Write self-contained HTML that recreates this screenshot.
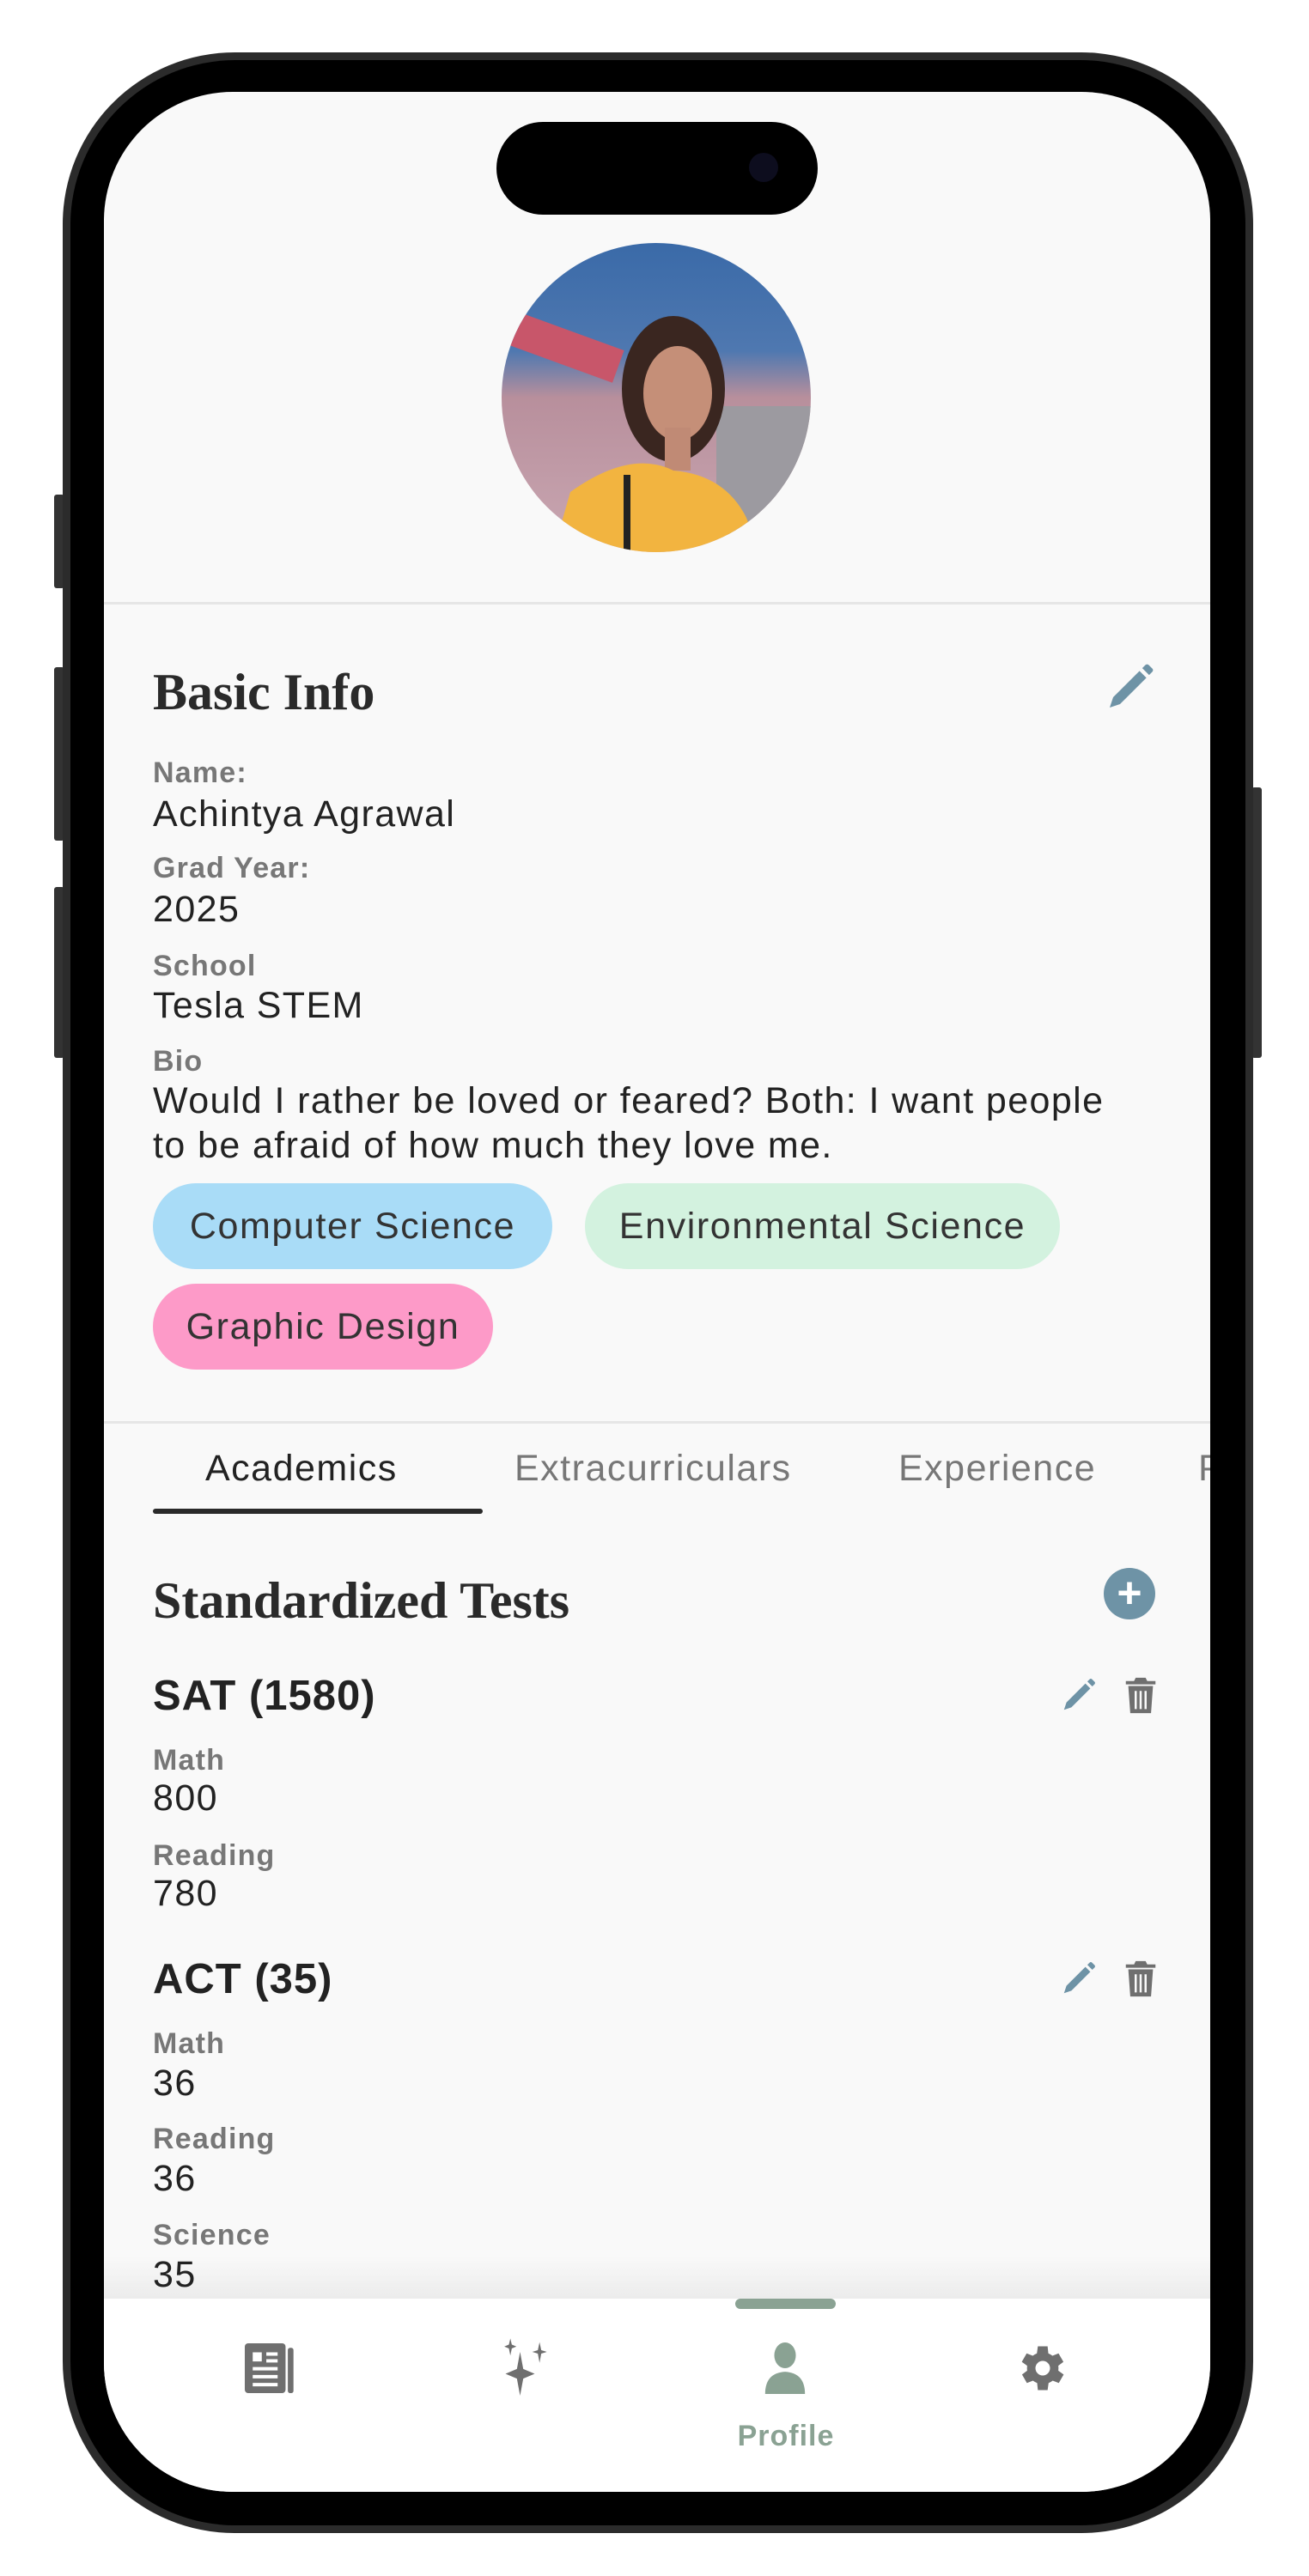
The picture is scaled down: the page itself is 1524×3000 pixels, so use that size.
<!DOCTYPE html>
<html><head><meta charset="utf-8"><style>
*{margin:0;padding:0;box-sizing:border-box}
body{width:1524px;height:3000px;background:#fff;position:relative;overflow:hidden;font-family:"Liberation Sans",sans-serif}
.a{position:absolute;white-space:nowrap}
.lbl{position:absolute;left:178px;font-size:34px;font-weight:bold;color:#777;line-height:40px;letter-spacing:1.2px}
.val{position:absolute;left:178px;font-size:43px;color:#222;line-height:48px;letter-spacing:1.4px}
.chip{position:absolute;height:100px;border-radius:50px;font-size:43px;color:#333;line-height:100px;text-align:center;letter-spacing:1.6px}
.serif{font-family:"Liberation Serif",serif;color:#2a2a2a;font-size:60px;line-height:70px;font-weight:bold}
.tab{position:absolute;top:4px;font-size:43px;line-height:52px;letter-spacing:1.5px}
</style></head><body>
<div class="a" style="left:63px;top:576px;width:12px;height:109px;background:#333;border-radius:3px"></div>
<div class="a" style="left:63px;top:777px;width:12px;height:202px;background:#333;border-radius:3px"></div>
<div class="a" style="left:63px;top:1033px;width:12px;height:199px;background:#333;border-radius:3px"></div>
<div class="a" style="left:1457px;top:917px;width:12px;height:315px;background:#333;border-radius:3px"></div>
<div class="a" style="left:73px;top:61px;width:1386px;height:2889px;border-radius:200px;background:#2b2b2b"></div>
<div class="a" style="left:82px;top:70px;width:1368px;height:2871px;border-radius:192px;background:#000"></div>
<div class="a" style="left:121px;top:107px;width:1288px;height:2795px;border-radius:150px;background:#f9f9f9;overflow:hidden">
  <div class="a" style="left:0;top:2520px;width:1288px;height:50px;background:linear-gradient(#f9f9f9,#ececec)"></div>
  <div class="a" style="left:0;top:2570px;width:1288px;height:230px;background:#fff"></div>
</div>
<div class="a" style="left:578px;top:142px;width:374px;height:108px;border-radius:54px;background:#000"></div>
<div class="a" style="left:872px;top:178px;width:34px;height:34px;border-radius:50%;background:#0d0d1e"></div>
<svg class="a" style="left:584px;top:283px" width="360" height="360" viewBox="0 0 360 360">
<defs><clipPath id="c"><circle cx="180" cy="180" r="180"/></clipPath>
<linearGradient id="bg" x1="0" y1="0" x2="0" y2="1"><stop offset="0" stop-color="#3a6aa8"/><stop offset=".35" stop-color="#4f78b0"/><stop offset=".5" stop-color="#b88f9c"/><stop offset="1" stop-color="#c9a7b2"/></linearGradient></defs>
<g clip-path="url(#c)">
<rect width="360" height="360" fill="url(#bg)"/>
<rect x="0" y="100" width="140" height="40" fill="#c8566a" transform="rotate(20 70 120)"/>
<rect x="250" y="190" width="110" height="150" fill="#9c9aa0"/>
<ellipse cx="200" cy="170" rx="60" ry="85" fill="#3a2620"/>
<ellipse cx="205" cy="175" rx="40" ry="55" fill="#c58f78"/>
<rect x="190" y="215" width="30" height="50" fill="#c08a75"/>
<path d="M60 360 L80 290 Q150 240 200 265 Q260 270 285 320 L300 360Z" fill="#f2b440"/>
<rect x="142" y="270" width="8" height="90" fill="#222"/>
</g></svg>
<div class="a" style="left:121px;top:701px;width:1288px;height:3px;background:#e6e6e6"></div>
<div class="a serif" style="left:178px;top:771px">Basic Info</div>
<svg class="a" style="left:1284px;top:768px" width="64" height="64" viewBox="0 0 24 24"><path d="M3 21 L4.5 16.5 L16 5 L19 8 L7.5 19.5Z M17.2 3.8 L18.6 2.4 Q19.3 1.8 20 2.4 L21.6 4 Q22.2 4.7 21.6 5.4 L20.2 6.8Z" fill="#6e93a6"/></svg>
<div class="lbl" style="top:880px">Name:</div>
<div class="val" style="top:924px">Achintya Agrawal</div>
<div class="lbl" style="top:991px">Grad Year:</div>
<div class="val" style="top:1035px">2025</div>
<div class="lbl" style="top:1105px">School</div>
<div class="val" style="top:1147px">Tesla STEM</div>
<div class="lbl" style="top:1216px">Bio</div>
<div class="val" style="top:1258px">Would I rather be loved or feared? Both: I want people</div>
<div class="val" style="top:1310px">to be afraid of how much they love me.</div>
<div class="chip" style="left:178px;top:1378px;width:465px;background:#a9dcf7">Computer Science</div>
<div class="chip" style="left:681px;top:1378px;width:553px;background:#d3f2df">Environmental Science</div>
<div class="chip" style="left:178px;top:1495px;width:396px;background:#fd9ac8">Graphic Design</div>
<div class="a" style="left:121px;top:1655px;width:1288px;height:3px;background:#e6e6e6"></div>
<div class="a" style="left:121px;top:1680px;width:1288px;height:60px;overflow:hidden">
<div class="tab" style="left:118px;color:#222">Academics</div>
<div class="tab" style="left:478px;color:#777">Extracurriculars</div>
<div class="tab" style="left:925px;color:#777">Experience</div>
<div class="tab" style="left:1274px;color:#777">P</div>
</div>
<div class="a" style="left:178px;top:1757px;width:384px;height:6px;background:#2a2a2a;border-radius:3px"></div>
<div class="a serif" style="left:178px;top:1829px">Standardized Tests</div>
<div class="a" style="left:1285px;top:1826px;width:60px;height:60px;border-radius:50%;background:#6e93a6;color:#fff;font-size:50px;line-height:58px;text-align:center;font-weight:bold">+</div>
<div class="a" style="left:178px;top:1946px;font-size:49px;font-weight:bold;color:#222;line-height:58px;letter-spacing:1px">SAT (1580)</div>
<svg class="a" style="left:1233px;top:1951px" width="46" height="46" viewBox="0 0 24 24"><path d="M3 21 L4.5 16.5 L16 5 L19 8 L7.5 19.5Z M17.2 3.8 L18.6 2.4 Q19.3 1.8 20 2.4 L21.6 4 Q22.2 4.7 21.6 5.4 L20.2 6.8Z" fill="#6e93a6"/></svg>
<svg class="a" style="left:1308px;top:1952px" width="40" height="46" viewBox="0 0 20 24"><path d="M7 1h6l1 2h5v2H1V3h5z M2.5 6h15l-1.2 16.5H3.7z" fill="#6f6f6f"/><path d="M7 9v11M10 9v11M13 9v11" stroke="#f9f9f9" stroke-width="1.3"/></svg>
<div class="lbl" style="top:2030px">Math</div>
<div class="val" style="top:2070px">800</div>
<div class="lbl" style="top:2141px">Reading</div>
<div class="val" style="top:2181px">780</div>
<div class="a" style="left:178px;top:2276px;font-size:49px;font-weight:bold;color:#222;line-height:58px;letter-spacing:1px">ACT (35)</div>
<svg class="a" style="left:1233px;top:2281px" width="46" height="46" viewBox="0 0 24 24"><path d="M3 21 L4.5 16.5 L16 5 L19 8 L7.5 19.5Z M17.2 3.8 L18.6 2.4 Q19.3 1.8 20 2.4 L21.6 4 Q22.2 4.7 21.6 5.4 L20.2 6.8Z" fill="#6e93a6"/></svg>
<svg class="a" style="left:1308px;top:2282px" width="40" height="46" viewBox="0 0 20 24"><path d="M7 1h6l1 2h5v2H1V3h5z M2.5 6h15l-1.2 16.5H3.7z" fill="#6f6f6f"/><path d="M7 9v11M10 9v11M13 9v11" stroke="#f9f9f9" stroke-width="1.3"/></svg>
<div class="lbl" style="top:2360px">Math</div>
<div class="val" style="top:2402px">36</div>
<div class="lbl" style="top:2471px">Reading</div>
<div class="val" style="top:2513px">36</div>
<div class="lbl" style="top:2583px">Science</div>
<div class="val" style="top:2625px">35</div>
<div class="a" style="left:121px;top:2677px;width:1288px;height:40px;background:#fff"></div>
<div class="a" style="left:856px;top:2677px;width:117px;height:12px;border-radius:6px;background:#8aa293"></div>
<svg class="a" style="left:285px;top:2728px" width="58" height="60" viewBox="0 0 22 22"><rect x="0" y="0" width="18" height="22" rx="1.5" fill="#6f6f6f"/><rect x="19" y="2" width="2.5" height="20" rx="1" fill="#6f6f6f"/><path d="M3.5 4h4v4h-4zM9.5 4h5v1.5h-5zM9.5 7h5v1.5h-5zM3.5 10.5h11v1.5h-11zM3.5 14h11v1.5h-11zM3.5 17.5h11v1.5h-11z" fill="#fff"/></svg>
<svg class="a" style="left:580px;top:2722px" width="68" height="68" viewBox="0 0 24 24"><path d="M9 6 L10.3 13 L15 15 L10.3 17 L9 24 L7.7 17 L3 15 L7.7 13Z M5 0.5 L5.6 3 L7.5 3.8 L5.6 4.6 L5 7.5 L4.4 4.6 L2.5 3.8 L4.4 3Z M17 2 L17.7 5.3 L20 6 L17.7 6.7 L17 10.5 L16.3 6.7 L14 6 L16.3 5.3Z" fill="#6f6f6f"/></svg>
<svg class="a" style="left:886px;top:2728px" width="56" height="60" viewBox="0 0 20 22"><ellipse cx="10" cy="5.5" rx="4.6" ry="5.5" fill="#8aa293"/><path d="M1.5 22 Q1.5 13 10 12.5 Q18.5 13 18.5 22Z" fill="#8aa293"/></svg>
<svg class="a" style="left:1180px;top:2724px" width="68" height="68" viewBox="0 0 24 24"><path d="M19.4 13a7.7 7.7 0 0 0 0-2l2.1-1.6-2-3.5-2.5 1a7.5 7.5 0 0 0-1.7-1L15 3h-4l-.4 2.9a7.5 7.5 0 0 0-1.7 1l-2.5-1-2 3.5L6.6 11a7.7 7.7 0 0 0 0 2l-2.1 1.6 2 3.5 2.5-1a7.5 7.5 0 0 0 1.7 1L11 21h4l.4-2.9a7.5 7.5 0 0 0 1.7-1l2.5 1 2-3.5z" fill="#6f6f6f" transform="translate(-1 0)"/><circle cx="12" cy="12" r="3" fill="#fff"/></svg>
<div class="a" style="left:815px;top:2815px;width:200px;text-align:center;font-size:34px;font-weight:bold;color:#8aa293;line-height:44px;letter-spacing:1px">Profile</div>
</body></html>
